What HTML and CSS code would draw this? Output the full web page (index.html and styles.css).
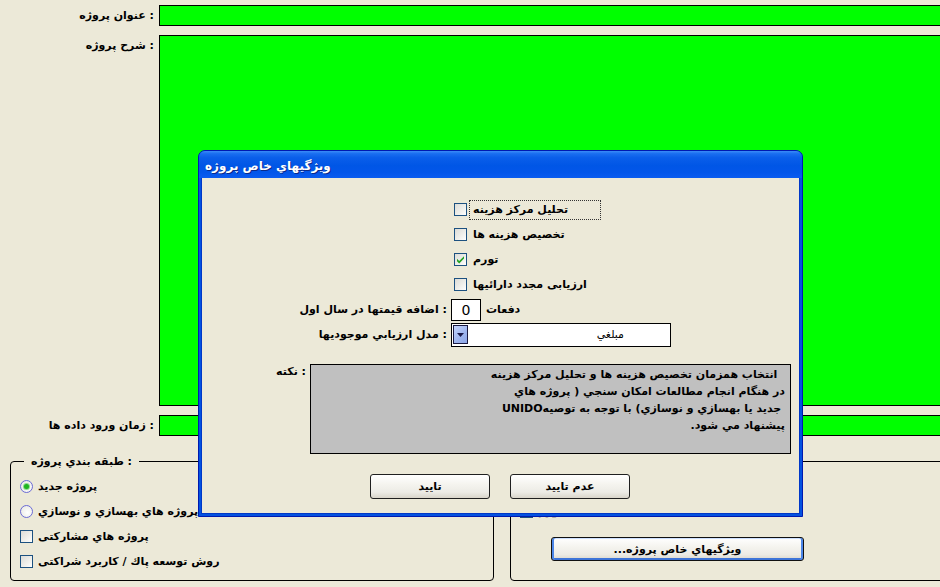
FILE: index.html
```html
<!DOCTYPE html>
<html lang="fa">
<head>
<meta charset="utf-8">
<title>ويژگيهاي خاص پروژه</title>
<link rel="stylesheet" href="styles.css">
</head>
<body>
<div class="page">
  <div class="fields">
    <div class="lbl" dir="rtl">: عنوان پروژه</div>
    <div class="green short"></div>
    <div class="lbl top" dir="rtl">: شرح پروژه</div>
    <div class="green tall"></div>
    <div class="lbl" dir="rtl">: زمان ورود داده ها</div>
    <div class="green short"></div>
  </div>
  <div class="groups">
    <div class="group g-left">
      <span class="legend" dir="rtl">: طبقه بندي پروژه</span>
      <div class="item"><span class="radio on"></span><span class="itxt" dir="rtl">پروژه جديد</span></div>
      <div class="item"><span class="radio"></span><span class="itxt" dir="rtl">پروژه هاي بهسازي و نوسازي</span></div>
      <div class="item"><span class="chk"></span><span class="itxt" dir="rtl">پروژه هاي مشاركتى</span></div>
      <div class="item"><span class="chk"></span><span class="itxt" dir="rtl">روش توسعه پاك / كاربرد شراكتى</span></div>
    </div>
    <div class="group g-right">
      <div class="item"><span class="chk"></span><span class="itxt" dir="rtl">محاسبه تورم</span></div>
      <button class="xpbtn default wide" dir="rtl">ويژگيهاي خاص پروژه...</button>
    </div>
  </div>
</div>

<div class="dialog">
  <div class="titlebar" dir="rtl"><span class="ttext">ويژگيهاي خاص پروژه</span></div>
  <div class="client">
    <div class="row"><div class="lab"></div><div class="ctl"><span class="chk"></span><span class="ctxt focus" dir="rtl">تحليل مركز هزينه</span></div></div>
    <div class="row"><div class="lab"></div><div class="ctl"><span class="chk"></span><span class="ctxt" dir="rtl">تخصيص هزينه ها</span></div></div>
    <div class="row"><div class="lab"></div><div class="ctl"><span class="chk checked"><svg width="11" height="11" viewBox="0 0 11 11"><path d="M2 4.8 L4.2 7 L9 2.2 L9 4.6 L4.2 9.4 L2 7.2 Z" fill="#21a121"/></svg></span><span class="ctxt" dir="rtl">تورم</span></div></div>
    <div class="row"><div class="lab"></div><div class="ctl"><span class="chk"></span><span class="ctxt" dir="rtl">ارزيابى مجدد دارائيها</span></div></div>
    <div class="row"><div class="lab" dir="rtl">: اضافه قيمتها در سال اول</div><div class="ctl"><span class="numbox">0</span><span class="ctxt after" dir="rtl">دفعات</span></div></div>
    <div class="row"><div class="lab" dir="rtl">: مدل ارزيابي موجوديها</div><div class="ctl"><div class="select"><span class="ddbtn"><svg width="7" height="4" viewBox="0 0 7 4"><path d="M0 0 H7 L3.5 4 Z" fill="#1b1b4a"/></svg></span><span class="seltxt" dir="rtl">مبلغي</span></div></div></div>
    <div class="noterow">
      <div class="notelab" dir="rtl">: نكته</div>
      <div class="notebox" dir="rtl">
        <div>&nbsp;&nbsp;انتخاب همزمان تخصيص هزينه ها و تحليل مركز هزينه</div>
        <div>در هنگام انجام مطالعات امكان سنجي ( پروژه هاي</div>
        <div>&nbsp;جديد يا بهسازي و نوسازي) با توجه به توصيه‌UNIDO</div>
        <div>پيشنهاد مي شود.</div>
      </div>
    </div>
    <div class="btnrow">
      <button class="xpbtn" dir="rtl">تاييد</button>
      <button class="xpbtn" dir="rtl">عدم تاييد</button>
    </div>
  </div>
</div>
</body>
</html>
```
FILE: styles.css
```css
html, body {
  margin: 0;
  padding: 0;
  background: #ECE9D8;
  overflow: hidden;
  width: 940px;
  height: 587px;
}
body {
  font-family: "DejaVu Sans", sans-serif;
  font-size: 11px;
  font-weight: bold;
  color: #000;
  position: relative;
}
.page {
  padding-top: 5px;
}
.fields {
  display: grid;
  grid-template-columns: 159px 1fr;
  row-gap: 9px;
  margin-right: -3px;
}
.lbl {
  text-align: right;
  padding-right: 5px;
  line-height: 21px;
  white-space: nowrap;
}
.lbl.top {
  align-self: start;
}
.green {
  background: #00FF00;
  border: 1px solid #000;
  box-sizing: border-box;
}
.green.short { height: 21px; }
.green.tall { height: 371px; }

.groups {
  display: flex;
  margin-top: 25px;
  padding-left: 10px;
  gap: 16px;
}
.group {
  position: relative;
  border: 1px solid #000;
  border-radius: 4px;
  height: 120px;
  box-sizing: border-box;
}
.g-left {
  width: 484px;
  padding: 12px 0 0 9px;
}
.g-right {
  flex: 1;
  margin-right: -6px;
  padding: 37px 0 0 9px;
}
.legend {
  position: absolute;
  top: -8px;
  left: 13px;
  padding: 0 7px;
  background: #ECE9D8;
  line-height: 15px;
}
.item {
  display: flex;
  align-items: center;
  height: 25px;
  gap: 5px;
}
.itxt { white-space: nowrap; }

.chk {
  width: 13px;
  height: 13px;
  box-sizing: border-box;
  border: 1px solid #1C5180;
  background: linear-gradient(135deg, #DCDCD7 0%, #F0F0EC 60%, #FFFFFF 100%);
  display: inline-flex;
  align-items: center;
  justify-content: center;
  flex: none;
}
.radio {
  width: 13px;
  height: 13px;
  box-sizing: border-box;
  border: 1px solid #6B6BD6;
  border-radius: 50%;
  background: radial-gradient(circle at 60% 60%, #FFFFFF 0%, #EDEDE8 70%, #D8D8D0 100%);
  display: inline-flex;
  align-items: center;
  justify-content: center;
  flex: none;
}
.radio.on::after {
  content: "";
  width: 5px;
  height: 5px;
  border-radius: 50%;
  background: #1FB51F;
  box-shadow: 0 0 0 1px #8CD88C;
}

.xpbtn {
  font-family: "DejaVu Sans", sans-serif;
  font-size: 11px;
  font-weight: bold;
  color: #000;
  width: 120px;
  height: 25px;
  border: 1px solid #1F1F1F;
  border-radius: 3px;
  background: linear-gradient(#FFFFFF 0%, #F5F4EF 40%, #ECEBE5 75%, #D9D5CA 100%);
  padding: 0;
  margin: 0;
}
.xpbtn.wide {
  width: 253px;
  height: 24px;
  margin: 13px 0 0 31px;
  display: block;
  border-color: #111;
  box-shadow: inset 2px 0 #4C86E8, inset -2px 0 #4C86E8, inset 0 1px #CDE0FF, inset 0 -2px #3D74D8;
}

/* dialog window */
.dialog {
  position: absolute;
  left: 198px;
  top: 150px;
  width: 605px;
  height: 367px;
  box-sizing: border-box;
  background: #0452E0;
  border: 1px solid #0019B0;
  border-radius: 7px 7px 0 0;
  padding: 0 2px 2px;
  display: flex;
  flex-direction: column;
}
.titlebar {
  height: 27px;
  margin: 0 -2px;
  border-radius: 6px 6px 0 0;
  background: linear-gradient(#3A8CF8 0%, #1A6EF0 10%, #0A5EEA 25%, #0056E6 55%, #0356EA 80%, #0A5CF0 100%);
  display: flex;
  align-items: center;
  justify-content: flex-end;
  padding: 0 8px 0 6px;
  flex: none;
}
.ttext {
  color: #FFFFFF;
  font-size: 12px;
  font-weight: bold;
  text-shadow: 1px 1px 0 #0A2A8A;
  padding-top: 2px;
}
.client {
  flex: 1;
  background: #ECE9D8;
  padding-top: 19px;
  border: 1px solid #0038C8;
  border-top: none;
}
.row {
  display: flex;
  align-items: center;
  height: 25px;
}
.lab {
  width: 245px;
  flex: none;
  text-align: right;
  white-space: nowrap;
}
.ctl {
  margin-left: 4px;
  display: flex;
  align-items: center;
}
.ctl > .chk {
  margin-left: 3px;
}
.ctxt {
  margin-left: 2px;
  padding: 2px 3px 3px;
  white-space: nowrap;
  border: 1px solid transparent;
}
.ctxt.focus {
  border: 1px dotted #333;
  padding-right: 32px;
}
.ctxt.after {
  margin-left: 1px;
}
.numbox {
  width: 30px;
  height: 22px;
  box-sizing: border-box;
  border: 1px solid #000;
  background: #FFFFFF;
  font-size: 14px;
  font-weight: normal;
  text-align: center;
  line-height: 20px;
}
.select {
  width: 220px;
  height: 24px;
  box-sizing: border-box;
  border: 1px solid #000;
  background: #FFFFFF;
  display: flex;
  align-items: center;
  padding-left: 1px;
}
.ddbtn {
  width: 15px;
  height: 19px;
  box-sizing: border-box;
  border: 1px solid #1A1A40;
  background: linear-gradient(135deg, #C4D4FA 0%, #9DB4EE 60%, #8CA6E8 100%);
  display: inline-flex;
  align-items: center;
  justify-content: center;
  flex: none;
}
.seltxt {
  flex: 1;
  text-align: right;
  padding-right: 46px;
  font-weight: normal;
}
.noterow {
  display: flex;
  margin-top: 17px;
}
.notelab {
  width: 104px;
  flex: none;
  text-align: right;
  padding-top: 1px;
  white-space: nowrap;
}
.notebox {
  margin-left: 4px;
  width: 481px;
  height: 90px;
  box-sizing: border-box;
  border: 1px solid #000;
  background: #C0C0C0;
  padding: 1px 5px 0 0;
  line-height: 17px;
  text-align: right;
  white-space: nowrap;
}
.btnrow {
  display: flex;
  gap: 20px;
  margin-top: 20px;
  padding-left: 168px;
}
```
